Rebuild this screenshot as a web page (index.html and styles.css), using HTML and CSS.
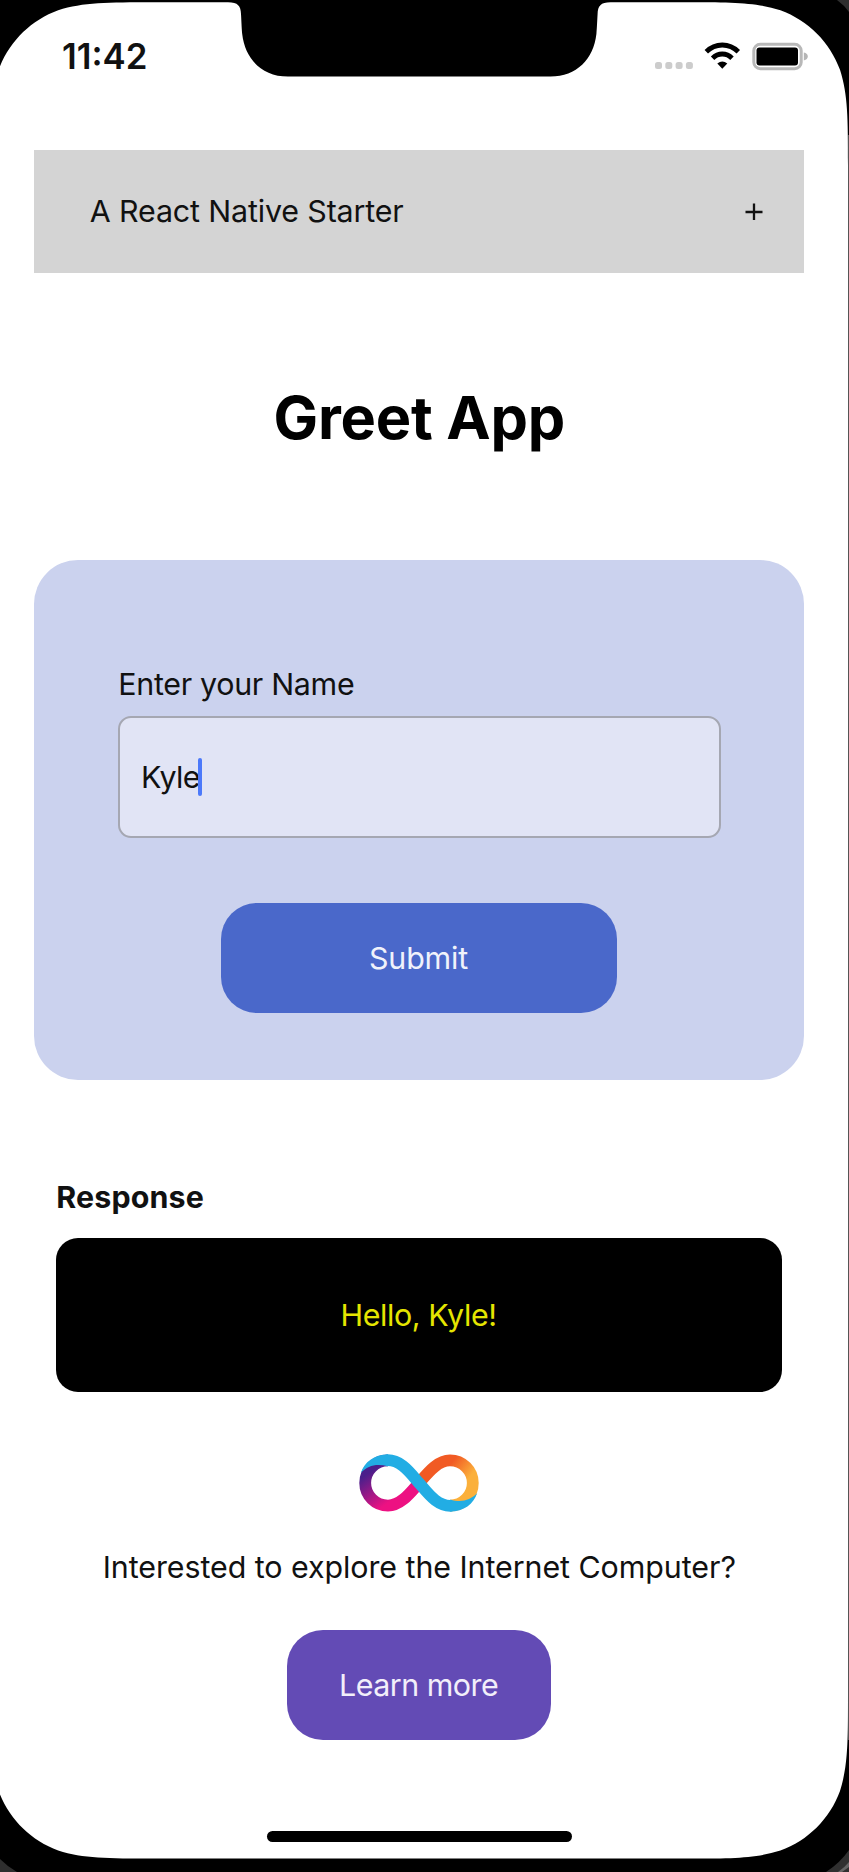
FILE: index.html
```html
<!DOCTYPE html>
<html lang="en">
<head>
<meta charset="utf-8">
<title>Greet App</title>
<link rel="stylesheet" href="styles.css">
</head>
<body>
<div class="phone">
  <svg class="bezel" viewBox="0 0 849 1872" aria-hidden="true">
    <rect width="849" height="1872" fill="#000"/>
    <path d="M837 0H849V12Q844 5 837 0ZM0 1859Q8 1867 17 1872H0Z" fill="#2e2e2e"/>
    <path d="M849 1850Q840 1863 826 1872H849Z" fill="#303030"/>
    <path d="M849 1862Q845 1867 838 1872H842L849 1867Z" fill="#666"/>
    <path d="M848.5 135V1740" stroke="#555" stroke-width="1"/>
    <path fill="#fff" d="M154.2 2.2H228C238 2.2 240.8 6 241 14C241.5 22 241.5 26 242.2 34C245 59 262 76.5 288 76.5H550.6C576.6 76.5 593.6 59 596.4 34C597.1 26 597.1 22 597.6 14C597.8 6 600.6 2.2 610.6 2.2H684.4C731.5 2.2 755.1 2.2 780.4 10.2C808.1 20.3 829.9 42.1 840 69.8C848 95.1 848 118.7 848 165.8V1694.9C848 1742 848 1765.6 840 1790.9C829.9 1818.6 808.1 1840.4 780.4 1850.5C755.1 1858.5 731.5 1858.5 684.4 1858.5H154.2C107.1 1858.5 83.5 1858.5 58.2 1850.5C30.5 1840.4 8.7 1818.6 -1.4 1790.9C-9.4 1765.6 -9.4 1742 -9.4 1694.9V165.8C-9.4 118.7 -9.4 95.1 -1.4 69.8C8.7 42.1 30.5 20.3 58.2 10.2C83.5 2.2 107.1 2.2 154.2 2.2Z"/>
  </svg>
  <div class="screen">
    <header class="status">
      <span class="time">11:42</span>
      <svg class="status-icons" width="156" height="32" viewBox="0 0 156 32" aria-hidden="true">
        <g fill="#ccc"><rect x="1" y="22" width="7" height="7" rx="2.5"/><rect x="11.3" y="22" width="7" height="7" rx="2.5"/><rect x="21.6" y="22" width="7" height="7" rx="2.5"/><rect x="31.9" y="22" width="7" height="7" rx="2.5"/></g>
        <g fill="none" stroke="#000" stroke-width="4.8">
          <path d="M52.3 11.8Q59 5 68.3 5Q77.6 5 84.3 11.8"/>
          <path d="M58.6 18.2Q62.7 14 68.3 14Q73.9 14 78 18.2"/>
        </g>
        <path d="M63.3 23.6Q68.3 19.4 73.3 23.6L68.3 28.8Z"/>
        <rect x="99.8" y="4.3" width="47.4" height="24.4" rx="6.5" fill="none" stroke="#b8b8b8" stroke-width="3"/>
        <rect x="102.5" y="7.4" width="41.5" height="18" rx="3"/>
        <path d="M149.8 12.6Q153.8 13.5 153.8 16.5T149.8 20.4Z" fill="#b5b5b5"/>
      </svg>
    </header>
    <main class="content">
      <div class="accordion"><span>A React Native Starter</span><svg width="18" height="18" viewBox="0 0 18 18"><path d="M9 1.5V18M.5 10H17.5" stroke="#111" stroke-width="2.3"/></svg></div>
      <h1 class="title">Greet App</h1>
      <section class="card">
        <label class="label">Enter your Name</label>
        <div class="input"><span class="value">Kyle</span><span class="caret"></span></div>
        <button class="submit">Submit</button>
      </section>
      <section class="response">
        <h2 class="response-title">Response</h2>
        <div class="output"><span>Hello, Kyle!</span></div>
      </section>
      <svg class="logo" width="120" height="58" viewBox="0 0 120 58" aria-label="Internet Computer">
        <defs>
          <linearGradient id="warm" gradientUnits="userSpaceOnUse" x1="84" y1="8" x2="112" y2="30"><stop offset=".2" stop-color="#f15a24"/><stop offset=".85" stop-color="#fbb03b"/></linearGradient>
          <linearGradient id="cool" gradientUnits="userSpaceOnUse" x1="36" y1="52" x2="10" y2="16"><stop offset=".15" stop-color="#ed1182"/><stop offset=".95" stop-color="#4b1f8b"/></linearGradient>
        </defs>
        <g fill="none" stroke-width="11.8">
          <path d="M60 29C52 38 42 51.6 29 51.6A22.8 22.6 0 0 1 29 6.4" stroke="url(#cool)"/>
          <path d="M60 29C68 20 78 6.4 91 6.4A22.8 22.6 0 0 1 91 51.6" stroke="url(#warm)"/>
          <path d="M27 6.3C42 5 52 20 60 29S78 53 93 51.7" stroke="#22ade4"/>
        </g>
        <path fill="#22ade4" d="M29 .5C15 .5 5.5 8 1.8 19C9 11.5 17 9.5 29 12.3ZM91 57.5C105 57.5 114.5 50 118.2 39C111 46.5 103 48.5 91 45.7Z"/>
      </svg>
      <p class="prompt">Interested to explore the Internet Computer?</p>
      <button class="learn">Learn more</button>
    </main>
    <div class="home-bar"></div>
  </div>
</div>
</body>
</html>
```
FILE: styles.css
```css
* { box-sizing: border-box; }
body {
  margin: 0;
  background: #000;
  font-family: Inter, sans-serif;
  font-size: 30.4px;
  line-height: 36px;
  color: #111;
}
.phone { position: relative; width: 849px; height: 1872px; overflow: hidden; }
.bezel { position: absolute; inset: 0; width: 849px; height: 1872px; }
.screen { position: relative; display: flex; flex-direction: column; height: 1872px; }
.status {
  display: flex;
  justify-content: space-between;
  height: 149.7px;
  padding: 40px 39px 0 62px;
}
.time { font-size: 34.8px; font-weight: 600; line-height: 33px; }
.content {
  display: flex;
  flex-direction: column;
  align-items: center;
  width: 770px;
  margin-left: 34.3px;
}
.accordion {
  display: flex;
  align-items: center;
  justify-content: space-between;
  width: 100%;
  height: 123px;
  padding: 0 41.5px 0 55.5px;
  background: #d4d4d4;
  letter-spacing: -0.14px;
}
.title {
  margin: 104px 0 0;
  height: 183.4px;
  font-size: 59.5px;
  font-weight: 700;
  line-height: 80px;
  letter-spacing: -0.25px;
  color: #000;
}
.card {
  display: flex;
  flex-direction: column;
  align-items: center;
  width: 100%;
  height: 519.5px;
  padding-top: 106px;
  border-radius: 44px;
  background: #cbd2ee;
}
.label { width: 602px; height: 49.5px; letter-spacing: -0.3px; }
.input {
  display: flex;
  align-items: center;
  width: 602.5px;
  height: 122px;
  padding: 0 21px;
  border: 2px solid #a5a7b2;
  border-radius: 13px;
  background: #e1e4f5;
}
.value { letter-spacing: -0.7px; }
.caret { width: 4px; height: 38px; margin-left: -1.5px; border-radius: 2px; background: #4c79fa; }
button { border: 0; padding: 0; font: inherit; }
.submit {
  width: 396px;
  height: 110.5px;
  margin-top: 65px;
  padding-right: 1.5px;
  border-radius: 36px;
  background: #4a68ca;
  color: #f0f2fb;
  letter-spacing: -0.15px;
}
.response { width: 726px; margin-top: 99.5px; }
.response-title { margin: 0; height: 58.5px; font-size: 30.4px; font-weight: 700; line-height: 36px; letter-spacing: 0.15px; }
.output {
  display: flex;
  align-items: center;
  justify-content: center;
  height: 154px;
  padding-right: 1.5px;
  border-radius: 22px;
  background: #000;
  color: #e5e500;
  letter-spacing: -0.4px;
}
.logo { margin-top: 62px; }
.prompt { margin: 37px 0 0; height: 81px; white-space: nowrap; letter-spacing: -0.06px; }
.learn { width: 264px; height: 110px; padding-right: 1.5px; border-radius: 36px; background: #634bb5; color: #f2effa; letter-spacing: -0.5px; }
.home-bar { width: 305px; height: 11px; margin: auto 0 30.5px 267px; border-radius: 6px; background: #000; }
```
